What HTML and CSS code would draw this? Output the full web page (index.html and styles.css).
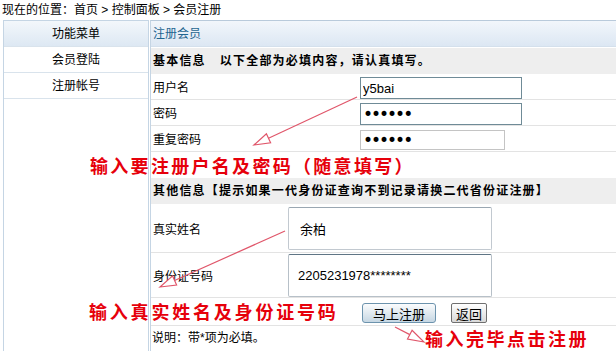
FILE: index.html
```html
<!DOCTYPE html>
<html lang="zh-CN">
<head>
    <meta charset="UTF-8">
    <meta name="viewport" content="width=device-width, initial-scale=1.0">
    <title>会员注册</title>
    <link rel="stylesheet" href="styles.css">
</head>
<body>

    <!-- 当前位置 -->
    <div class="crumb">现在的位置：首页 &gt; 控制面板 &gt; 会员注册</div>

    <div class="layout">
        <!-- 左侧菜单 -->
        <div class="side">
            <div class="side-head">功能菜单</div>
            <div class="side-item">会员登陆</div>
            <div class="side-item">注册帐号</div>
        </div>

        <!-- 注册表单 -->
        <div class="main">
            <div class="main-head">注册会员</div>
            <form class="reg-form" method="post" action="reg.php">
                <div class="sec-title">基本信息<span class="gap"></span>以下全部为必填内容，请认真填写。</div>
                <div class="row">
                    <label class="label" for="username">用户名</label>
                    <input class="txt" type="text" id="username" name="username" value="y5bai">
                </div>
                <div class="row">
                    <label class="label" for="password">密码</label>
                    <input class="txt pwd" type="password" id="password" name="password" value="123456">
                </div>
                <div class="row">
                    <label class="label" for="password2">重复密码</label>
                    <input class="txt pwd short" type="password" id="password2" name="password2" value="123456">
                </div>
                <div class="row blank"></div>

                <div class="sec-title">其他信息【提示如果一代身份证查询不到记录请换二代省份证注册】</div>
                <div class="row tall">
                    <label class="label small" for="realname">真实姓名</label>
                    <input class="big" type="text" id="realname" name="realname" value="余柏">
                </div>
                <div class="row tall2">
                    <label class="label small" for="idcard">身份证号码</label>
                    <input class="big dark" type="text" id="idcard" name="idcard" value="2205231978********">
                </div>
                <div class="row btns">
                    <button class="btn-main" type="submit">马上注册</button>
                    <button class="btn-back" type="button">返回</button>
                </div>
                <div class="note">说明：带*项为必填。</div>
            </form>
        </div>
    </div>

    <!-- 截图上的标注 -->
    <svg class="marks" width="616" height="351" viewBox="0 0 616 351">
        <g fill="#fff" stroke="#e0566a" stroke-width="1.2">
            <path d="M357 97 L268.5 138.3" fill="none"/>
            <polygon points="254,145 270.6,142.8 266.4,133.7"/>
            <path d="M285 231 L174.6 280.5" fill="none"/>
            <polygon points="160,287 176.6,285.1 172.6,275.9"/>
            <path d="M395 327 L409.8 334.6" fill="none"/>
            <polygon points="424,342 407.5,339 412.1,330.2"/>
        </g>
    </svg>
    <div class="tip tip-1">输入要注册户名及密码（随意填写）</div>
    <div class="tip tip-2">输入真实姓名及身份证号码</div>
    <div class="tip tip-3">输入完毕点击注册</div>

</body>
</html>
```

FILE: styles.css
```css
body {
    margin: 0;
    font-family: "Liberation Sans", "Noto Sans CJK SC", sans-serif;
    font-size: 12px;
    color: #000;
    background-color: #fff;
    position: relative;
    height: 351px;
    overflow: hidden;
}

.crumb {
    height: 20px;
    line-height: 20px;
    padding-left: 2px;
}

.layout {
    display: flex;
    gap: 1px;
    padding-left: 3px;
}

/* 左侧菜单 */
.side {
    flex-shrink: 0;
    width: 146px;
    height: 340px;
    box-sizing: border-box;
    border: 1px solid #c5d5e4;
}

.side-head,
.side-item {
    height: 25px;
    line-height: 27px;
    text-align: center;
    border-bottom: 1px solid #d9e3ec;
}

.side-head {
    background: linear-gradient(#f3f7fb, #dde8f3);
}

/* 表单区 */
.main {
    flex: 1;
    border-top: 1px solid #b9cadb;
    border-left: 1px solid #c5d5e4;
}

.main-head {
    height: 25px;
    line-height: 27px;
    padding-left: 2px;
    color: #1f6590;
    background: linear-gradient(#f2f6fb, #dce7f3);
    border-bottom: 1px solid #d4e0ec;
    margin-bottom: 1px;
}

.sec-title {
    height: 26px;
    line-height: 27px;
    padding-left: 2px;
    background-color: #eeeeee;
    font-weight: bold;
    letter-spacing: 1.2px;
    white-space: nowrap;
}

.gap {
    display: inline-block;
    width: 14px;
}

.row {
    display: flex;
    align-items: flex-start;
    height: 26px;
    box-sizing: border-box;
    border-bottom: 1px solid #e3e3e3;
}

.row.blank {
    border-bottom: none;
}

.label {
    width: 209px;
    flex-shrink: 0;
    box-sizing: border-box;
    padding: 2px 0 0 2px;
    line-height: 25px;
}

.txt {
    width: 162px;
    height: 22px;
    margin: 3px 0 0;
    padding: 0 2px;
    box-sizing: border-box;
    border: 1px solid #6f8b97;
    font-family: "Liberation Sans", sans-serif;
    font-size: 13px;
    color: #000;
}

.pwd {
    font-family: "DejaVu Sans", sans-serif;
    font-size: 17px;
    letter-spacing: -2px;
}

.short {
    width: 145px;
    height: 20px;
    margin-top: 4px;
    border-color: #c4c4c4;
}

.row.tall {
    height: 49px;
    align-items: center;
}

.row.tall2 {
    height: 45px;
}

.label.small {
    width: 137px;
}

.row.tall .label.small {
    line-height: 20px;
    padding-top: 4px;
}

.row.tall2 .label.small {
    line-height: 20px;
    margin-top: 12px;
}

.big {
    width: 204px;
    height: 43px;
    margin: 0;
    padding: 0 0 0 11px;
    box-sizing: border-box;
    border: 1px solid #c2c9d0;
    border-top-color: #9aa7b2;
    border-radius: 2px;
    font-family: "Liberation Sans", "Noto Sans CJK SC", sans-serif;
    font-size: 13px;
    color: #000;
}

.dark {
    height: 43px;
    margin-top: 1px;
    padding-left: 9px;
    border-color: #b7c0c8;
    border-top-color: #5f7585;
}

.row.btns {
    height: 28px;
    padding-left: 211px;
    align-items: flex-start;
}

.btn-main,
.btn-back {
    height: 20px;
    margin-top: 5px;
    padding: 0;
    font-family: "Liberation Sans", "Noto Sans CJK SC", sans-serif;
    font-size: 13px;
    color: #000;
    cursor: pointer;
}

.btn-main {
    width: 74px;
    border: 1px solid #6c93ad;
    border-radius: 3px;
    background: linear-gradient(#fbfcfd, #c6d7e3);
}

.btn-back {
    width: 36px;
    margin-left: 15px;
    border: 1px solid #6f6f6f;
    border-radius: 2px;
    background: linear-gradient(#ffffff, #d9d9d9);
}

.note {
    height: 25px;
    line-height: 25px;
    padding-left: 1px;
}

/* 标注 */
.marks {
    position: absolute;
    left: 0;
    top: 0;
    pointer-events: none;
}

.tip {
    position: absolute;
    color: #e6000b;
    font-family: "Noto Sans CJK SC", sans-serif;
    font-weight: bold;
    font-size: 18px;
    line-height: 20px;
    letter-spacing: 2.3px;
    white-space: nowrap;
}

.tip-1 {
    left: 90px;
    top: 155px;
}

.tip-2 {
    left: 89px;
    top: 301px;
    letter-spacing: 2.8px;
}

.tip-3 {
    left: 425px;
    top: 328px;
    letter-spacing: 2.5px;
}
```
